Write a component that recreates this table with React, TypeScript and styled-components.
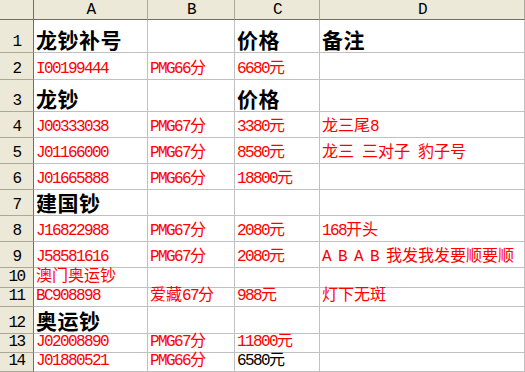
import styled, { createGlobalStyle } from 'styled-components'

const GlobalStyle = createGlobalStyle`
  html, body {
    margin: 0;
    padding: 0;
    background: #fff;
  }
`

const COLS = '34px 114px 87px 85px 205px'

const Sheet = styled.div`
  width: 525px;
  height: 372px;
  overflow: hidden;
  background: #fff;
  font-family: 'Liberation Mono', 'Noto Sans CJK SC', monospace;
  font-size: 16px;
`

const Row = styled.div<{ $h: number }>`
  display: grid;
  grid-template-columns: ${COLS};
  height: ${(p) => p.$h}px;
`

const HeadCell = styled.div`
  box-sizing: border-box;
  display: flex;
  align-items: flex-end;
  justify-content: center;
  background: #ece9d8;
  color: #000;
  line-height: 16px;
  padding-bottom: 1px;
  letter-spacing: -1.6px;
  border-right: 1px solid #aca899;
  border-bottom: 1px solid #716f64;
`

const Corner = styled(HeadCell)`
  border-right-color: #716f64;
`

const RowNum = styled(HeadCell)`
  padding-bottom: 2px;
  border-right-color: #716f64;
  border-bottom-color: #aca899;
`

const Cell = styled.div<{ $kind?: 'red' | 'black' | 'title' }>`
  box-sizing: border-box;
  display: flex;
  align-items: flex-end;
  min-width: 0;
  white-space: pre;
  overflow: visible;
  padding: 0 0 ${(p) => (p.$kind === 'title' ? 1 : 2)}px 2px;
  border-right: 1px solid #c0c0c0;
  border-bottom: 1px solid #c0c0c0;
  color: ${(p) => (p.$kind === 'red' ? '#ff0000' : '#000')};
  font-family: ${(p) =>
    p.$kind === 'title'
      ? "'Noto Sans CJK SC', sans-serif"
      : "'Liberation Mono', 'Noto Sans CJK SC', monospace"};
  font-size: ${(p) => (p.$kind === 'title' ? '21px' : '16px')};
  font-weight: ${(p) => (p.$kind === 'title' ? 700 : 400)};
  line-height: ${(p) => (p.$kind === 'title' ? '24px' : '16px')};
  letter-spacing: ${(p) => (p.$kind === 'title' ? '0.5px' : '-1.6px')};
`

// han characters are full width in the sheet font, so no tightening for them
const Han = styled.span`
  letter-spacing: 0;
`

type Kind = 'red' | 'black' | 'title'
type Val = string | { t: string; k: Kind } | null

const rows: { h: number; kind: Kind; cells: Val[] }[] = [
  { h: 33, kind: 'title', cells: ['龙钞补号', null, '价格', '备注'] },
  { h: 27, kind: 'red', cells: ['I00199444', 'PMG66分', '6680元', null] },
  { h: 32, kind: 'title', cells: ['龙钞', null, '价格', null] },
  { h: 26, kind: 'red', cells: ['J00333038', 'PMG67分', '3380元', '龙三尾8'] },
  { h: 26, kind: 'red', cells: ['J01166000', 'PMG67分', '8580元', '龙三 三对子 豹子号'] },
  { h: 26, kind: 'red', cells: ['J01665888', 'PMG66分', '18800元', null] },
  { h: 26, kind: 'title', cells: ['建国钞', null, null, null] },
  { h: 26, kind: 'red', cells: ['J16822988', 'PMG67分', '2080元', '168开头'] },
  { h: 26, kind: 'red', cells: ['J58581616', 'PMG67分', '2080元', 'A B A B 我发我发要顺要顺'] },
  { h: 20, kind: 'red', cells: ['澳门奥运钞', null, null, null] },
  { h: 19, kind: 'red', cells: ['BC908898', '爱藏67分', '988元', '灯下无斑'] },
  { h: 27, kind: 'title', cells: ['奥运钞', null, null, null] },
  { h: 19, kind: 'red', cells: ['J02008890', 'PMG67分', '11800元', null] },
  { h: 19, kind: 'red', cells: ['J01880521', 'PMG66分', { t: '6580元', k: 'black' }, null] },
]

function Text({ value, kind }: { value: string; kind: Kind }) {
  if (kind === 'title') return <>{value}</>
  const parts = value.split(/([\u4e00-\u9fff]+)/).filter(Boolean)
  return (
    <span>
      {parts.map((s, i) =>
        /[\u4e00-\u9fff]/.test(s) ? <Han key={i}>{s}</Han> : <span key={i}>{s}</span>
      )}
    </span>
  )
}

export default function App() {
  return (
    <>
      <GlobalStyle />
      <Sheet>
        <Row $h={20}>
          <Corner />
          {['A', 'B', 'C', 'D'].map((c) => (
            <HeadCell key={c}>{c}</HeadCell>
          ))}
        </Row>
        {rows.map((r, i) => (
          <Row key={i} $h={r.h}>
            <RowNum>{i + 1}</RowNum>
            {r.cells.map((v, j) => {
              const kind = v && typeof v === 'object' ? v.k : r.kind
              const text = v && typeof v === 'object' ? v.t : v ?? ''
              return (
                <Cell key={j} $kind={kind}>
                  <Text value={text} kind={kind} />
                </Cell>
              )
            })}
          </Row>
        ))}
      </Sheet>
    </>
  )
}
